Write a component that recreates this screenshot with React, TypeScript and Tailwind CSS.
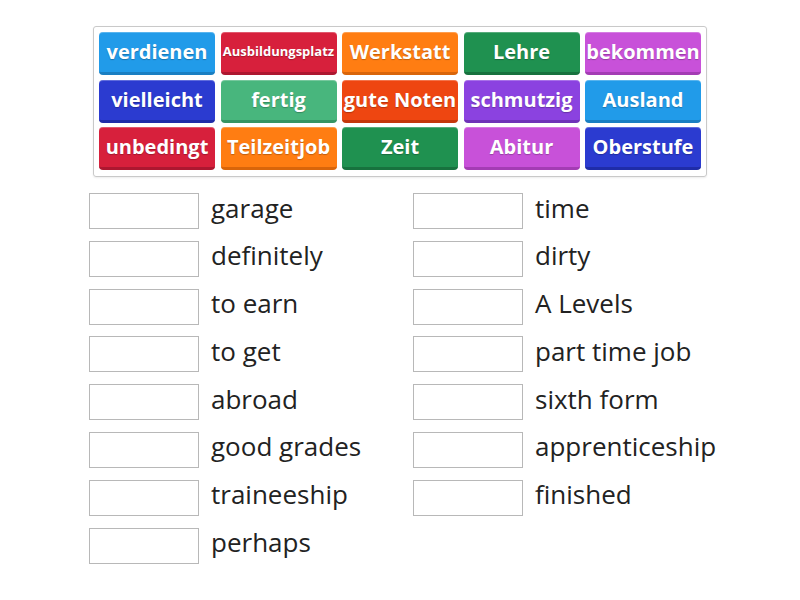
import React from 'react';

type Tile = { label: string; bg: string; small?: boolean };

const tiles: Tile[] = [
  { label: 'verdienen', bg: 'bg-[#219be9] border-[#1a7fc2]' },
  { label: 'Ausbildungsplatz', bg: 'bg-[#d7203c] border-[#ad1730]', small: true },
  { label: 'Werkstatt', bg: 'bg-[#ff7d12] border-[#d9650a]' },
  { label: 'Lehre', bg: 'bg-[#1f9150] border-[#17723e]' },
  { label: 'bekommen', bg: 'bg-[#c851d9] border-[#a43cb4]' },
  { label: 'vielleicht', bg: 'bg-[#2b3bd0] border-[#1f2ca8]' },
  { label: 'fertig', bg: 'bg-[#48b67d] border-[#379463]' },
  { label: 'gute Noten', bg: 'bg-[#ee4611] border-[#c4370b]' },
  { label: 'schmutzig', bg: 'bg-[#8b42e0] border-[#6f32b8]' },
  { label: 'Ausland', bg: 'bg-[#219be9] border-[#1a7fc2]' },
  { label: 'unbedingt', bg: 'bg-[#d7203c] border-[#ad1730]' },
  { label: 'Teilzeitjob', bg: 'bg-[#ff7d12] border-[#d9650a]' },
  { label: 'Zeit', bg: 'bg-[#1f9150] border-[#17723e]' },
  { label: 'Abitur', bg: 'bg-[#c851d9] border-[#a43cb4]' },
  { label: 'Oberstufe', bg: 'bg-[#2b3bd0] border-[#1f2ca8]' },
];

const left = ['garage', 'definitely', 'to earn', 'to get', 'abroad', 'good grades', 'traineeship', 'perhaps'];
const right = ['time', 'dirty', 'A Levels', 'part time job', 'sixth form', 'apprenticeship', 'finished'];

function Slot({ text }: { text: string }) {
  return (
    <div className="flex items-center h-[36px]">
      <div className="w-[110px] h-[36px] shrink-0 border border-[#b8b8b8] bg-white" />
      <span className="ml-[12px] -mt-[7px] text-[26px] leading-none text-[#222] whitespace-nowrap">{text}</span>
    </div>
  );
}

export default function App() {
  return (
    <div className="w-[800px] h-[600px] bg-white overflow-hidden font-['Open_Sans',sans-serif]">
      <div className="pt-[26px] pl-[93px]">
        <div className="w-[614px] border border-[#c9c9c9] rounded-[3px] px-[5px] pt-[5px] pb-[6px] shadow-[0_1px_2px_rgba(0,0,0,0.08)]">
          <div className="grid grid-cols-[repeat(5,116px)] gap-x-[5.5px] gap-y-[4.5px]">
            {tiles.map((t) => (
              <div
                key={t.label}
                className={`h-[43px] rounded-[4px] border-b-[3px] flex items-center justify-center text-white font-bold whitespace-nowrap [text-shadow:0_1px_1px_rgba(0,0,0,0.25)] shadow-[inset_0_1px_0_rgba(255,255,255,0.25)] ${t.bg} ${t.small ? 'text-[13px]' : 'text-[20px]'}`}
              >
                {t.label}
              </div>
            ))}
          </div>
        </div>
      </div>
      <div className="flex pl-[89px] pt-[16px]">
        <div className="w-[324px] flex flex-col gap-[11.8px]">
          {left.map((w) => (
            <Slot key={w} text={w} />
          ))}
        </div>
        <div className="flex flex-col gap-[11.8px]">
          {right.map((w) => (
            <Slot key={w} text={w} />
          ))}
        </div>
      </div>
    </div>
  );
}
